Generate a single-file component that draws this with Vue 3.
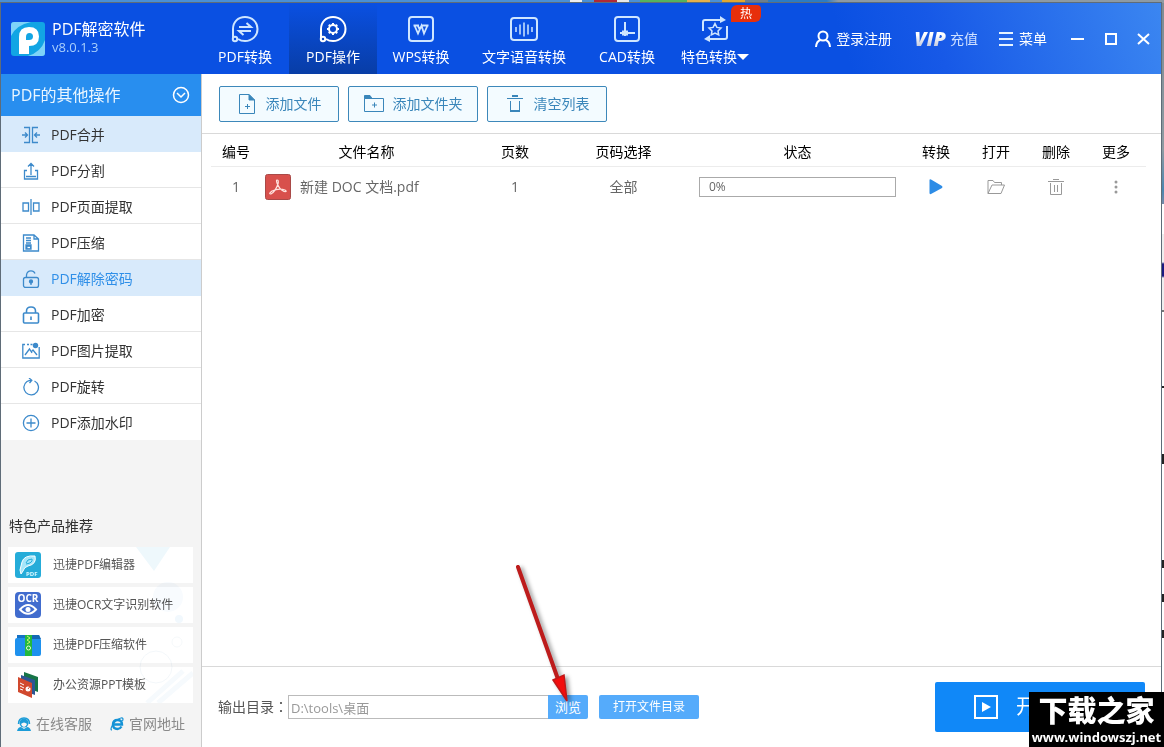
<script setup>
import { ref } from 'vue'

const tabs = [
  { id: 'pdf', label: 'PDF转换' },
  { id: 'ops', label: 'PDF操作' },
  { id: 'wps', label: 'WPS转换' },
  { id: 'voice', label: '文字语音转换' },
  { id: 'cad', label: 'CAD转换' },
  { id: 'special', label: '特色转换' },
]
const activeTab = ref('ops')

const operations = [
  { id: 'merge', label: 'PDF合并' },
  { id: 'split', label: 'PDF分割' },
  { id: 'extract', label: 'PDF页面提取' },
  { id: 'compress', label: 'PDF压缩' },
  { id: 'unlock', label: 'PDF解除密码' },
  { id: 'lock', label: 'PDF加密' },
  { id: 'image', label: 'PDF图片提取' },
  { id: 'rotate', label: 'PDF旋转' },
  { id: 'watermark', label: 'PDF添加水印' },
]
const activeOp = ref('unlock')

const products = [
  { id: 'editor', label: '迅捷PDF编辑器' },
  { id: 'ocr', label: '迅捷OCR文字识别软件' },
  { id: 'zip', label: '迅捷PDF压缩软件' },
  { id: 'ppt', label: '办公资源PPT模板' },
]

const files = [{ no: 1, name: '新建 DOC 文档.pdf', pages: 1, range: '全部', progress: '0%' }]
const outputDir = ref('D:\\tools\\桌面')
</script>

<template>
  <div class="desktop">
    <div class="window">
      <header class="titlebar">
        <div class="brand">
          <svg class="logo" viewBox="0 0 34 34" aria-hidden="true">
            <rect width="34" height="34" rx="3" fill="#12a5e4" />
            <path d="M0 14V3Q0 0 3 0H20Q5 3 0 14Z" fill="#7ed3f8" />
            <path d="M34 18V31Q34 34 31 34H17Q30 30 34 18Z" fill="#7ed3f8" />
            <path d="M8 32V15Q8 5 18 5Q28 5 28 14.500Q28 24 18 24V29Q18 32 15 32Z" fill="#fff" />
            <path d="M15 24V15Q15 11 18.500 11Q22 11 22 14.500Q22 18 18 18V24Z" fill="#12a5e4" />
            <path d="M14 18H18V32H14Z" fill="#fff" />
          </svg>
          <div>
            <h1>PDF解密软件</h1>
            <p>v8.0.1.3</p>
          </div>
        </div>

        <nav class="tabs">
          <button
            v-for="tab in tabs"
            :key="tab.id"
            type="button"
            class="tab"
            :class="{ active: tab.id === activeTab }"
            @click="activeTab = tab.id"
          >
            <svg viewBox="0 0 30 28" fill="none" stroke="#cfe6ff" stroke-width="2" aria-hidden="true">
              <g v-if="tab.id === 'pdf'">
                <path d="M3 23V14C3 7 8 2 15 2C22 2 27.500 7 27.500 14C27.500 21 22 26 15 26C12 26 9.500 25 8 24" />
                <circle cx="5" cy="24" r="2.200" />
                <path d="M9 12H21L16.500 8M21 16H9L13.500 20" />
              </g>
              <g v-else-if="tab.id === 'ops'" stroke="#fff">
                <path d="M3 23V14C3 7 8 2 15 2C22 2 27.500 7 27.500 14C27.500 21 22 26 15 26C12 26 9.500 25 8 24" />
                <circle cx="5" cy="24" r="2.200" />
                <circle cx="15" cy="14" r="4" />
                <path d="M15 8V10M15 18V20M9 14H11M19 14H21M10.800 9.800L12.200 11.200M17.800 16.800L19.200 18.200M10.800 18.200L12.200 16.800M17.800 11.200L19.200 9.800" />
              </g>
              <g v-else-if="tab.id === 'wps'">
                <rect x="3" y="2" width="24" height="24" rx="3" />
                <path d="M7.500 10.500H13M15.500 10.500H22.500M8.500 10.500L12 18.500L15.500 10.500L18 18.500L21.500 10.500M12 11L13.500 14" stroke-width="1.800" />
              </g>
              <g v-else-if="tab.id === 'voice'">
                <rect x="2" y="3" width="26" height="22" rx="3" />
                <path d="M7 12V17M11 9.500V19.500M15 7.500V21.500M19 9.500V19.500M23 12V17" stroke-width="1.500" />
              </g>
              <g v-else-if="tab.id === 'cad'">
                <rect x="3" y="2" width="24" height="24" rx="3" />
                <path d="M13 7V21M8 18H23" stroke-width="2" /><path d="M10 15.500H16V20.500H10Z" fill="#cfe6ff" stroke="none" />
              </g>
              <g v-else>
                <path d="M3 16V7Q3 5 5 5H23M27 11V22Q27 24 25 24H7" />
                <path d="M20 1L26 5L20 8ZM10 20L4 24L10 27Z" fill="#cfe6ff" stroke="none" />
                <path d="M15 8.500L16.900 12.400L21 13L18 16L18.700 20L15 18.100L11.300 20L12 16L9 13L13.100 12.400Z" stroke-width="1.500" />
              </g>
            </svg>
            <span class="tab-label">
              {{ tab.label }}
              <i v-if="tab.id === 'special'" class="caret"></i>
            </span>
            <span v-if="tab.id === 'special'" class="hot">热</span>
          </button>
        </nav>

        <div class="account">
          <button type="button" class="link login">
            <svg width="16" height="18" viewBox="0 0 16 18" fill="none" stroke="#fff" stroke-width="2" aria-hidden="true">
              <circle cx="8" cy="6" r="4.500" /><path d="M1 17Q1.500 11 5.500 10M15 17Q14.500 11 10.500 10" />
            </svg>
            登录注册
          </button>
          <button type="button" class="link vip"><em>VIP</em>充值</button>
          <button type="button" class="link menu">
            <svg width="14" height="14" viewBox="0 0 14 14" stroke="#e6f3ff" stroke-width="2" aria-hidden="true">
              <path d="M0 1H14M0 7H14M0 13H14" />
            </svg>
            菜单
          </button>
          <div class="controls">
            <button type="button" aria-label="最小化">
              <svg viewBox="0 0 13 13" stroke="#fff" stroke-width="2"><path d="M0 7H13" /></svg>
            </button>
            <button type="button" aria-label="最大化">
              <svg viewBox="0 0 13 13" fill="none" stroke="#fff" stroke-width="2"><path d="M2 2H12V12H2Z" /></svg>
            </button>
            <button type="button" aria-label="关闭">
              <svg viewBox="0 0 13 13" stroke="#fff" stroke-width="2"><path d="M1 2L12 12M12 2L1 12" /></svg>
            </button>
          </div>
        </div>
      </header>

      <div class="body">
        <aside class="sidebar">
          <button type="button" class="group">
            PDF的其他操作
            <svg width="18" height="18" viewBox="0 0 18 18" fill="none" stroke="#fff" aria-hidden="true">
              <circle cx="9" cy="9" r="7.500" stroke-width="1.500" /><path d="M5 7L9 11L13 7" stroke-width="1.500" />
            </svg>
          </button>
          <ul class="ops">
            <li v-for="op in operations" :key="op.id">
              <button
                type="button"
                :class="{ tinted: op.id === 'merge', selected: op.id === activeOp }"
                @click="activeOp = op.id"
              >
                <svg viewBox="0 0 18 18" fill="none" stroke="#3d8acb" stroke-width="1.300" aria-hidden="true">
                  <g v-if="op.id === 'merge'">
                    <path d="M2 1.500H7.500V16.500H2M16 1.500H10.500V16.500H16M0 9H5M3 6.500L5.500 9L3 11.500M18 9H13M15 6.500L12.500 9L15 11.500" />
                  </g>
                  <g v-else-if="op.id === 'split'">
                    <path d="M9 13V1.500M6 4.500L9 1.500L12 4.500M5 8.500H2.500V17H15.500V8.500H13M4 14.500H14" />
                  </g>
                  <g v-else-if="op.id === 'extract'">
                    <path d="M9 1V17M1 5H6.500V13H1ZM11.500 5H17V13H11.500Z" />
                  </g>
                  <g v-else-if="op.id === 'compress'">
                    <path d="M1.500 1H12L16.500 5V17H1.500ZM12 1V5H16.500" />
                    <path d="M4 4H9M4 6.500H9M4 9H9" /><path d="M4 11H9V15H4Z" fill="#3d8acb" /><path d="M5.500 13.500H8" stroke="#fff" />
                  </g>
                  <g v-else-if="op.id === 'unlock'">
                    <rect x="1.500" y="7.500" width="15" height="10" rx="2" />
                    <path d="M4.500 7.500V5Q5 0.800 9 0.800Q12 0.800 13 3.500" />
                    <circle cx="9" cy="11.500" r="1.500" fill="#3d8acb" /><path d="M9 12V15" />
                  </g>
                  <g v-else-if="op.id === 'lock'" stroke-width="1.600">
                    <rect x="1.500" y="7" width="15" height="10" rx="1" />
                    <path d="M4.500 7V5Q4.500 1 9 1Q13.500 1 13.500 5V7M9 10.500V14" />
                  </g>
                  <g v-else-if="op.id === 'image'">
                    <path d="M3 2.500H0.800V16H17.200V5M5 2.500H7M8.500 2.500H10.500" />
                    <path d="M3 13L7.500 7L10 11M9 10L11 8L15 13" />
                    <circle cx="13.500" cy="3.500" r="2.700" fill="#3d8acb" stroke="none" />
                  </g>
                  <g v-else-if="op.id === 'rotate'">
                    <path d="M12.500 3A7.300 7.300 0 1 1 5 3.500Q7 2.300 9.500 2.300M7 0L9.800 2.300L7.500 5" />
                  </g>
                  <g v-else>
                    <circle cx="9" cy="9" r="7.600" /><path d="M9 4.500V13.500M4.500 9H13.500" />
                  </g>
                </svg>
                {{ op.label }}
              </button>
            </li>
          </ul>

          <section class="promo">
            <h2>特色产品推荐</h2>
            <ul>
              <li v-for="item in products" :key="item.id">
                <a href="#">
                  <svg v-if="item.id === 'editor'" viewBox="0 0 26 26" aria-hidden="true">
                    <rect width="26" height="26" rx="3" fill="#25acd9" />
                    <path d="M6 22L5 18L7 10Q9 3 20 4Q22 12 13 14Q9 15 8 19Z" fill="#a5e6fa" stroke="#fff" />
                    <path d="M11 11Q12 7 17 7Q18 11 11 12" fill="none" stroke="#25acd9" />
                    <text x="11" y="24" font-size="6" font-weight="700" fill="#d7f8ff">PDF</text>
                  </svg>
                  <svg v-else-if="item.id === 'ocr'" viewBox="0 0 26 26" aria-hidden="true">
                    <rect width="26" height="26" rx="4" fill="#416cce" />
                    <text x="13" y="10" font-size="10" font-weight="700" fill="#fff" text-anchor="middle">OCR</text>
                    <path d="M5 17.500Q13 8.500 21 17.500Q13 26 5 17.500Z" fill="none" stroke="#fff" stroke-width="2" />
                    <circle cx="13" cy="17.500" r="2.500" fill="#fff" />
                  </svg>
                  <svg v-else-if="item.id === 'zip'" viewBox="0 0 26 26" aria-hidden="true">
                    <path d="M2 3H24V12H2Z" fill="#1672c4" /><path d="M0 8Q0 6 2 6H10L12 3H24L26 8V22Q26 24 24 24H2Q0 24 0 22Z" fill="#1e91ee" />
                    <path d="M10 3H24L26 7H10Z" fill="#1468b4" />
                    <path d="M10 3H17V24H10Z" fill="#24b83e" />
                    <path d="M12 4L15 6L12 8L15 10L12 12" fill="none" stroke="#c9f86e" /><circle cx="13.500" cy="16" r="2" fill="none" stroke="#e6ffd0" />
                  </svg>
                  <svg v-else viewBox="0 0 26 26" aria-hidden="true">
                    <path d="M9 0L23 5V20L9 15Z" fill="#167447" /><path d="M6 3L20 8V23L6 18Z" fill="#2d5594" />
                    <path d="M3 5L17 11V26L3 20Z" fill="#d1492e" />
                    <path d="M5 11L9 13M5 14L9 16M5 17L8 18" stroke="#fff" /><circle cx="13" cy="17" r="2.500" fill="#fff" /><path d="M13 17L15 14.500" stroke="#d1492e" />
                  </svg>
                  {{ item.label }}
                </a>
              </li>
            </ul>
            <svg class="decor" viewBox="0 0 185 156" aria-hidden="true">
              <path d="M128 0H162L146 24Z" fill="#eef8fc" />
              <circle cx="160" cy="50" r="15" fill="#f8fbfe" /><circle cx="171" cy="72" r="4" fill="#f1f8fd" />
              <circle cx="169" cy="95" r="5" fill="none" stroke="#f5f8fa" /><circle cx="148" cy="120" r="16" fill="none" stroke="#f3f7fa" />
              <path d="M139 156L175 124M150 156L185 126" stroke="#f6fafd" stroke-width="5" />
            </svg>
          </section>

          <div class="support">
            <a href="#">
              <svg width="14" height="14" viewBox="0 0 14 14" aria-hidden="true">
                <circle cx="7" cy="6" r="4.500" fill="#1b9cd8" /><path d="M1.500 7Q1.500 1 7 1Q12.500 1 12.500 7" fill="none" stroke="#1b9cd8" stroke-width="1.500" />
                <path d="M0 14Q1 10 4 10L7 12L10 10Q13 10 14 14Z" fill="#1b9cd8" /><path d="M4 7Q7 4 10 7Q9 10 7 10Q5 10 4 7Z" fill="#f5f5f5" />
              </svg>
              在线客服
            </a>
            <a href="#">
              <svg width="14" height="14" viewBox="0 0 14 14" fill="none" stroke="#1593d6" aria-hidden="true">
                <path d="M11.500 9.500Q10 12 7.500 12Q3 12 3 7.500Q3 3 7.500 3Q12 3 12 7.500H4" stroke-width="2.400" />
                <path d="M2 13Q0 13 2 9Q6 2 11 1Q14 0.500 12.500 4" stroke-width="1.200" />
              </svg>
              官网地址
            </a>
          </div>
        </aside>

        <main class="content">
          <div class="toolbar">
            <button type="button">
              <svg viewBox="0 0 20 20" fill="none" stroke="#3a86ba" aria-hidden="true">
                <path d="M2.500 0.500H12L17.500 6V19.500H2.500Z" /><path d="M12 0.500V6H17.500Z" fill="#3a86ba" /><path d="M10.500 10V15M8 12.500H13" />
              </svg>
              添加文件
            </button>
            <button type="button" class="folder">
              <svg viewBox="0 0 20 20" fill="none" stroke="#3a86ba" aria-hidden="true">
                <path d="M0.500 4.500H19.500V17.500H0.500Z" /><path d="M0.500 1.500H6L8 4.500H0.500Z" fill="#3a86ba" /><path d="M10.500 8.500V13.500M8 11H13" />
              </svg>
              添加文件夹
            </button>
            <button type="button">
              <svg viewBox="0 0 20 20" fill="none" stroke="#3a86ba" aria-hidden="true">
                <path d="M2 4.500H18" /><path d="M7 2H13M5 17H15" stroke-width="2" /><path d="M5.500 7V17.500H14.500V7" />
              </svg>
              清空列表
            </button>
          </div>

          <div class="list">
            <table>
              <colgroup>
                <col class="c-no" /><col /><col class="c-pages" /><col class="c-range" /><col class="c-state" />
                <col class="c-act" /><col class="c-act" /><col class="c-act" /><col class="c-act" />
              </colgroup>
              <thead>
                <tr>
                  <th>编号</th><th>文件名称</th><th>页数</th><th>页码选择</th><th>状态</th>
                  <th>转换</th><th>打开</th><th>删除</th><th>更多</th>
                </tr>
              </thead>
              <tbody>
                <tr v-for="file in files" :key="file.no">
                  <td>{{ file.no }}</td>
                  <td>
                    <div class="file">
                      <svg width="26" height="26" viewBox="0 0 26 26" aria-hidden="true">
                        <rect x="0.500" y="0.500" width="25" height="25" rx="2" fill="#d8504c" stroke="#a94a48" />
                        <path d="M12 6Q14 6 13 10Q10 18 6 20Q3 20 7 17Q14 14 20 16Q23 18 19 17.500Q14 15 12 9Q11 6 12 6Z" fill="none" stroke="#ffe3df" stroke-width="1.200" />
                      </svg>
                      {{ file.name }}
                    </div>
                  </td>
                  <td>{{ file.pages }}</td>
                  <td>{{ file.range }}</td>
                  <td><div class="progress">{{ file.progress }}</div></td>
                  <td>
                    <button type="button" aria-label="转换">
                      <svg viewBox="0 0 18 18"><path d="M2.500 2Q2.500 1 4 1.500L15 8Q16 9 15 10L4 16Q2.500 16.500 2.500 15Z" fill="#2d8ce6" /></svg>
                    </button>
                  </td>
                  <td>
                    <button type="button" aria-label="打开">
                      <svg viewBox="0 0 18 18" fill="none" stroke="#999"><path d="M1 15.500V2.500H6L7.500 4.500H14.500V7M1 15.500L5 7H17.500L14 15.500Z" /></svg>
                    </button>
                  </td>
                  <td>
                    <button type="button" aria-label="删除">
                      <svg viewBox="0 0 18 18" fill="none" stroke="#999"><path d="M1 3.500H17M6 1.500H12M3.500 5V16.500H14.500V5M7.500 7V14M10.500 7V14" /></svg>
                    </button>
                  </td>
                  <td>
                    <button type="button" aria-label="更多">
                      <svg viewBox="0 0 18 18" fill="#999"><circle cx="9" cy="4" r="1.500" /><circle cx="9" cy="9" r="1.500" /><circle cx="9" cy="14" r="1.500" /></svg>
                    </button>
                  </td>
                </tr>
              </tbody>
            </table>
          </div>

          <footer class="output">
            <label for="output-dir">输出目录：</label>
            <input id="output-dir" v-model="outputDir" type="text" />
            <div class="browse">
              <button type="button" class="small">浏览</button>
              <svg class="pointer" width="70" height="150" viewBox="0 0 70 150" aria-hidden="true">
                <path d="M8 7L49 122" stroke="#bd1c1c" stroke-width="4" stroke-linecap="round" />
                <path d="M43 120L54 115L57 141Z" fill="#f20d0d" stroke="#c01818" stroke-width="1.500" />
              </svg>
            </div>
            <button type="button" class="small open">打开文件目录</button>
            <button type="button" class="start" aria-label="开始转换">
              <svg width="24" height="24" viewBox="0 0 24 24" aria-hidden="true">
                <path d="M1 1H23V23H1Z" fill="none" stroke="#fff" stroke-width="2" /><path d="M8 7L17 12L8 17Z" fill="#fff" />
              </svg>
              开
            </button>
          </footer>
        </main>
      </div>
    </div>

    <div class="stamp">
      <strong>下载之家</strong>
      <span>www.windowszj.net</span>
    </div>
  </div>
</template>

<style>
body {
  margin: 0;
}
</style>

<style scoped>
.desktop {
  position: relative;
  box-sizing: border-box;
  display: flex;
  min-height: 100vh;
  padding: 2px 2px 0 0;
  overflow: hidden;
  font: 14px/20px "Open Sans", "Noto Sans CJK SC", sans-serif;
  color: #333;
  background:
    linear-gradient(90deg, #4a90d5 0 49%, #eee 49% 50%, #4a90d5 50% 51%, #b02a35 51% 53%, #e8e8e8 53% 54%, #4a90d5 54% 55%, #55b35e 55% 59%, #e5b04b 59% 61%, #4a90d5 61% 62%, #e2a72f 62% 64%, #6d7f8e 64% 66%, #2c7cc4 66% 71%, #8d9aa3 72%) top / 100% 3px no-repeat,
    linear-gradient(#7d8b94, #8e9ba2 150px, #4a87b0 190px, #7789a8 204px, #fff 204px 234px, #eee 234px 262px, #1a1a80 264px 276px, #eee 278px 310px, #777 310px 312px, #fff 312px 386px, #222 386px 388px, #fff 388px 454px, #222 454px 464px, #fff 464px 560px, #222 560px 568px, #fff 568px 594px, #222 594px 602px, #fff 602px 630px, #222 630px 638px, #fff 638px) top right / 2px 100% no-repeat,
    #fff;
}
button {
  margin: 0;
  padding: 0;
  border: 0;
  background: none;
  font: inherit;
  color: inherit;
  cursor: pointer;
}
a {
  color: inherit;
  text-decoration: none;
}
ul {
  margin: 0;
  padding: 0;
  list-style: none;
}
svg {
  display: block;
  flex: none;
}
.window {
  flex: 1;
  display: flex;
  flex-direction: column;
  border: 1px solid #5f6c78;
  border-bottom: 0;
  background: #fff;
}

.titlebar {
  display: flex;
  height: 71px;
  color: #fff;
  background: linear-gradient(72deg, #0a50e2 72%, #1759e7 80%, #3b86f1);
}
.brand {
  display: flex;
  align-items: center;
  gap: 7px;
  box-sizing: border-box;
  width: 200px;
  padding-left: 10px;
}
.logo {
  width: 34px;
  height: 34px;
}
.brand h1 {
  margin: 0;
  font-size: 16px;
  font-weight: 400;
  line-height: 17px;
}
.brand p {
  margin: 0;
  font-size: 13px;
  line-height: 18px;
  color: #a9cffb;
}
.tabs {
  display: grid;
  grid-template-columns: 88px 88px 88px 118px 88px 88px;
}
.tab {
  position: relative;
  display: flex;
  flex-direction: column;
  align-items: center;
  padding-top: 12px;
  gap: 4px;
}
.tab svg {
  width: 30px;
  height: 28px;
}
.tab.active {
  background: linear-gradient(#0a50e2, #083da6);
}
.tab-label {
  display: flex;
  align-items: center;
  white-space: nowrap;
}
.caret {
  border: 6px solid transparent;
  border-top-color: #fff;
  border-bottom: 0;
}
.hot {
  position: absolute;
  top: 2px;
  right: -2px;
  width: 30px;
  border-radius: 6px 4px 6px 0;
  font-size: 12px;
  line-height: 17px;
  background: #e72f0b;
}
.account {
  display: flex;
  align-items: center;
  margin-left: auto;
  padding-right: 11px;
}
.link {
  display: flex;
  align-items: center;
  gap: 5px;
  white-space: nowrap;
}
.vip {
  gap: 2px;
  margin-left: 22px;
  color: #cfe0ff;
}
.vip em {
  padding-right: 2px;
  font-size: 20px;
  font-weight: 800;
  color: transparent;
  background: linear-gradient(#fff 30%, #b7bfd8);
  background-clip: text;
}
.menu {
  gap: 6px;
  margin-left: 21px;
}
.controls {
  display: flex;
  gap: 20px;
  margin-left: 24px;
}
.controls svg {
  width: 13px;
  height: 13px;
}

.body {
  flex: 1;
  display: flex;
}
.sidebar {
  display: flex;
  flex-direction: column;
  width: 200px;
  border-right: 1px solid #ccc;
  background: #f4f4f4;
}
.group {
  display: flex;
  align-items: center;
  justify-content: space-between;
  height: 42px;
  padding: 0 11px 0 10px;
  font-size: 16px;
  color: #eaf6ff;
  background: #288eef;
}
.ops button {
  display: flex;
  align-items: center;
  gap: 11px;
  box-sizing: border-box;
  width: 100%;
  height: 36px;
  padding: 2px 0 0 21px;
  border-bottom: 1px solid #e6e6e6;
  background: #fff;
}
.ops svg {
  width: 18px;
  height: 18px;
}
.ops li:last-child button {
  border-bottom-color: #fff;
}
.ops .tinted,
.ops .selected {
  border-bottom-color: #d8eafb;
  background: #d8eafb;
}
.ops .selected {
  color: #2f8fe8;
}
.promo {
  position: relative;
  margin-top: auto;
  padding: 0 8px 0 7px;
}
.promo h2 {
  margin: 0 0 11px 1px;
  font-size: 14px;
  font-weight: 400;
  line-height: 20px;
}
.promo ul {
  display: grid;
  gap: 4px;
}
.promo a {
  display: flex;
  align-items: center;
  gap: 12px;
  height: 36px;
  padding-left: 7px;
  font-size: 12px;
  color: #555;
  background: #fff;
}
.promo a svg {
  width: 26px;
  height: 26px;
}
.decor {
  position: absolute;
  right: 8px;
  bottom: 0;
  width: 185px;
  height: 156px;
  mix-blend-mode: multiply;
  pointer-events: none;
}
.support {
  display: flex;
  gap: 18px;
  padding: 11px 0 13px 16px;
  color: #8a8a8a;
}
.support a {
  display: flex;
  align-items: center;
  gap: 5px;
}

.content {
  flex: 1;
  display: flex;
  flex-direction: column;
  min-width: 0;
}
.toolbar {
  display: flex;
  gap: 9px;
  padding: 12px 17px 11px;
  border-bottom: 1px solid #d9d9d9;
}
.toolbar button {
  display: flex;
  align-items: center;
  justify-content: center;
  gap: 9px;
  box-sizing: border-box;
  width: 120px;
  height: 36px;
  border: 1px solid #3d88ba;
  border-radius: 2px;
  color: #3a86ba;
  background: #f3fbff;
}
.toolbar .folder {
  width: 130px;
}
.toolbar svg {
  width: 20px;
  height: 20px;
}
.list {
  flex: 1;
  padding: 0 15px 0 9px;
}
table {
  width: 100%;
  table-layout: fixed;
  border-collapse: collapse;
  text-align: center;
  color: #666;
}
.c-no {
  width: 50px;
}
.c-pages {
  width: 86px;
}
.c-range {
  width: 131px;
}
.c-state {
  width: 217px;
}
.c-act {
  width: 60px;
}
th {
  height: 28px;
  padding: 4px 0 0;
  border-bottom: 1px solid #ececec;
  font-weight: 400;
  color: #000;
}
td {
  height: 40px;
  padding: 0;
}
.file {
  display: flex;
  align-items: center;
  gap: 9px;
  padding-left: 4px;
}
.progress {
  margin: 0 10px;
  padding-left: 9px;
  border: 1px solid #aaa;
  font-size: 12px;
  line-height: 18px;
  text-align: left;
}
td button {
  display: block;
  margin: 0 auto;
}
td svg {
  width: 18px;
  height: 18px;
}
.file svg {
  width: 26px;
  height: 26px;
}
.output {
  display: flex;
  align-items: center;
  height: 80px;
  padding: 0 16px;
  border-top: 1px solid #d9d9d9;
}
.output label {
  width: 70px;
  font-family: "Open Sans", "Noto Sans CJK TC", sans-serif;
  white-space: nowrap;
  color: #555;
}
.output input {
  box-sizing: border-box;
  width: 260px;
  height: 24px;
  padding: 0 2px;
  border: 1px solid #bbb;
  border-right: 0;
  border-radius: 0;
  font: inherit;
  font-size: 13px;
  color: #999;
}
.browse {
  position: relative;
}
.small {
  display: block;
  width: 40px;
  height: 24px;
  border-radius: 0 2px 2px 0;
  font-size: 13px;
  color: #fff;
  background: #55abfb;
}
.open {
  width: 100px;
  margin-left: 11px;
  border-radius: 2px;
  font-size: 12px;
}
.pointer {
  position: absolute;
  left: -38px;
  bottom: 9px;
  filter: drop-shadow(3px 2px 2px #0006);
  pointer-events: none;
}
.start {
  display: flex;
  align-items: center;
  gap: 18px;
  box-sizing: border-box;
  width: 210px;
  height: 50px;
  margin-left: auto;
  padding-left: 39px;
  border-radius: 2px;
  overflow: hidden;
  font-size: 20px;
  color: #fff;
  background: #1088f8;
}
.stamp {
  position: absolute;
  right: 0;
  bottom: 0;
  display: flex;
  flex-direction: column;
  align-items: center;
  width: 135px;
  height: 55px;
  color: #fff;
  background: #000;
}
.stamp strong {
  font-size: 29px;
  font-weight: 900;
  line-height: 37px;
}
.stamp span {
  font-family: "Noto Sans", sans-serif;
  font-size: 13px;
  font-weight: 700;
  line-height: 16px;
}
</style>
